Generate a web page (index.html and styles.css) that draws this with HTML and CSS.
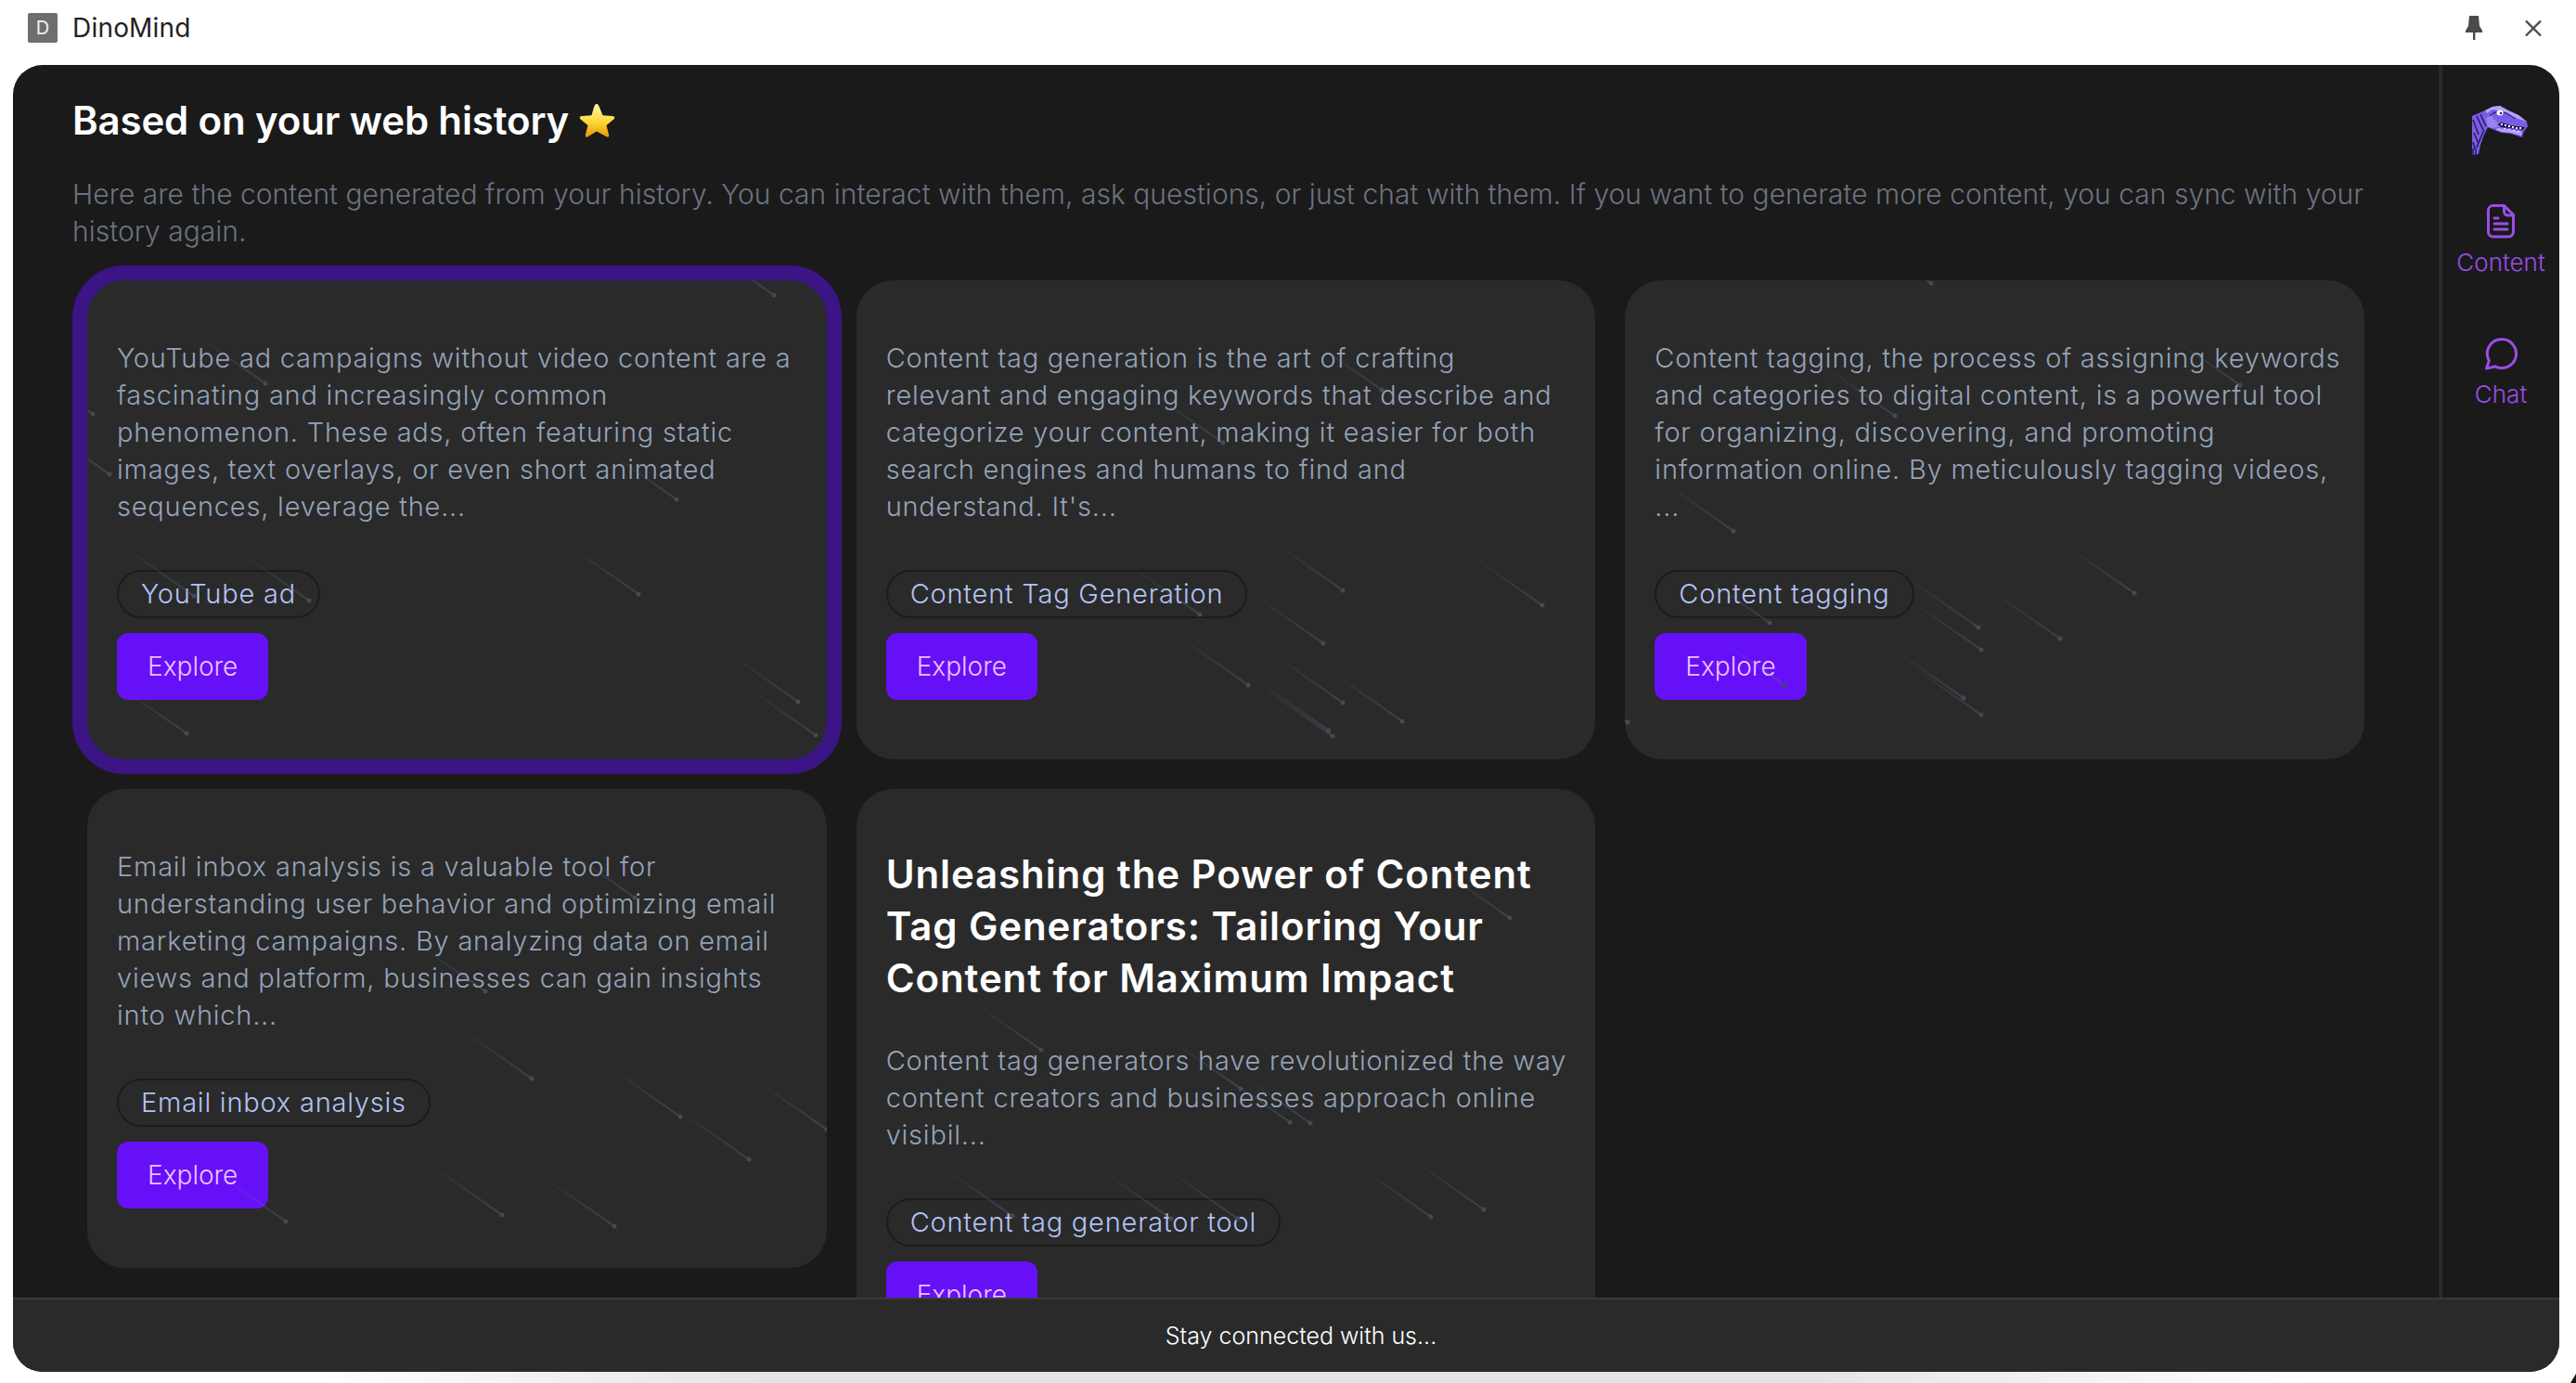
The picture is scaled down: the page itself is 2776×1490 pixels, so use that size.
FILE: index.html
```html
<!DOCTYPE html>
<html lang="en">
<head>
<meta charset="utf-8">
<title>DinoMind</title>
<link rel="stylesheet" href="styles.css">
</head>
<body>
<svg class="defs" width="0" height="0" aria-hidden="true">
  <defs>
    <linearGradient id="trail" x1="0" y1="0" x2="1" y2="1">
      <stop offset="0" stop-color="#64748b" stop-opacity="0"/>
      <stop offset="1" stop-color="#64748b" stop-opacity=".36"/>
    </linearGradient>
    <linearGradient id="gold" x1="0" y1="0" x2="0" y2="1">
      <stop offset="0" stop-color="#fff3b0"/>
      <stop offset=".55" stop-color="#fdd835"/>
      <stop offset="1" stop-color="#e8930c"/>
    </linearGradient>
    <g id="meteor">
      <line x1="-76" y1="-53" x2="0" y2="0" stroke="url(#trail)" stroke-width="2"/>
      <circle r="2.5" fill="#434a57"/>
    </g>
  </defs>
</svg>

<header class="titlebar">
  <div class="brand">
    <span class="app-icon">D</span>
    <span class="app-name">DinoMind</span>
  </div>
  <div class="window-actions">
    <svg class="pin" width="18" height="26" viewBox="0 0 18 26"><path d="M4 0h10l1 11 3 5v2H0v-2l3-5z M8 18h2.4v8H8z" fill="#4a4a4a"/></svg>
    <svg class="close" width="18" height="19" viewBox="0 0 18 19"><path d="M1 1.500l16 16M17 1.500L1 17.500" stroke="#4a4a4a" stroke-width="2.400" fill="none"/></svg>
  </div>
</header>

<div class="window">
  <div class="upper">
    <main class="content">
      <h1 class="title">Based on your web history<svg class="star" width="40" height="38" viewBox="0 0 40 38"><path d="M20 1c1.400 0 2 1 3 3.500l3.500 8.700 9.800.7c3 .2 4 1.800 1.800 3.800l-7.600 6.300 2.500 9.700c.7 2.700-.8 3.800-3 2.400L20 30.500l-9 5.600c-2.200 1.400-3.700.3-3-2.400l2.500-9.700-7.600-6.300C.7 15.700 1.700 14.100 4.700 13.900l9.800-.7L17 4.500C18 2 18.600 1 20 1z" fill="url(#gold)"/></svg></h1>
      <p class="intro">Here are the content generated from your history. You can interact with them, ask questions, or just chat with them. If you want to generate more content, you can sync with your<br>history again.</p>

      <section class="grid">
        <article class="card card-active">
          <svg class="meteors" aria-hidden="true">
            <use href="#meteor" x="740" y="16"/><use href="#meteor" x="192" y="111"/><use href="#meteor" x="6" y="144"/><use href="#meteor" x="24" y="209"/><use href="#meteor" x="635" y="236"/><use href="#meteor" x="239" y="345"/><use href="#meteor" x="594" y="338"/><use href="#meteor" x="115" y="340"/><use href="#meteor" x="107" y="488"/><use href="#meteor" x="766" y="454"/><use href="#meteor" x="785" y="490"/>
          </svg>
          <p class="summary">YouTube ad campaigns without video content are a<br>fascinating and increasingly common<br>phenomenon. These ads, often featuring static<br>images, text overlays, or even short animated<br>sequences, leverage the...</p>
          <span class="tag">YouTube ad</span>
          <a class="explore">Explore</a>
        </article>

        <article class="card">
          <svg class="meteors" aria-hidden="true">
            <use href="#meteor" x="524" y="334"/><use href="#meteor" x="739" y="350"/><use href="#meteor" x="370" y="360"/><use href="#meteor" x="503" y="391"/><use href="#meteor" x="395" y="175"/><use href="#meteor" x="566" y="118"/><use href="#meteor" x="422" y="436"/><use href="#meteor" x="524" y="455"/><use href="#meteor" x="588" y="475"/><use href="#meteor" x="509" y="485"/><use href="#meteor" x="513" y="491"/>
          </svg>
          <p class="summary">Content tag generation is the art of crafting<br>relevant and engaging keywords that describe and<br>categorize your content, making it easier for both<br>search engines and humans to find and<br>understand. It's...</p>
          <span class="tag">Content Tag Generation</span>
          <a class="explore">Explore</a>
        </article>

        <article class="card">
          <svg class="meteors" aria-hidden="true">
            <use href="#meteor" x="330" y="3"/><use href="#meteor" x="663" y="113"/><use href="#meteor" x="291" y="146"/><use href="#meteor" x="117" y="270"/><use href="#meteor" x="549" y="337"/><use href="#meteor" x="381" y="374"/><use href="#meteor" x="384" y="398"/><use href="#meteor" x="469" y="386"/><use href="#meteor" x="156" y="369"/><use href="#meteor" x="172" y="436"/><use href="#meteor" x="365" y="450"/><use href="#meteor" x="384" y="468"/><use href="#meteor" x="3" y="476"/>
          </svg>
          <p class="summary">Content tagging, the process of assigning keywords<br>and categories to digital content, is a powerful tool<br>for organizing, discovering, and promoting<br>information online. By meticulously tagging videos,<br>...</p>
          <span class="tag">Content tagging</span>
          <a class="explore">Explore</a>
        </article>

        <article class="card">
          <svg class="meteors" aria-hidden="true">
            <use href="#meteor" x="590" y="117"/><use href="#meteor" x="429" y="218"/><use href="#meteor" x="479" y="312"/><use href="#meteor" x="639" y="353"/><use href="#meteor" x="713" y="399"/><use href="#meteor" x="797" y="367"/><use href="#meteor" x="447" y="459"/><use href="#meteor" x="568" y="471"/><use href="#meteor" x="214" y="466"/>
          </svg>
          <p class="summary">Email inbox analysis is a valuable tool for<br>understanding user behavior and optimizing email<br>marketing campaigns. By analyzing data on email<br>views and platform, businesses can gain insights<br>into which...</p>
          <span class="tag">Email inbox analysis</span>
          <a class="explore">Explore</a>
        </article>

        <article class="card">
          <svg class="meteors" aria-hidden="true">
            <use href="#meteor" x="704" y="139"/><use href="#meteor" x="199" y="281"/><use href="#meteor" x="414" y="323"/><use href="#meteor" x="467" y="359"/><use href="#meteor" x="489" y="360"/><use href="#meteor" x="619" y="461"/><use href="#meteor" x="676" y="453"/><use href="#meteor" x="168" y="460"/><use href="#meteor" x="339" y="463"/><use href="#meteor" x="411" y="463"/>
          </svg>
          <h2 class="card-title">Unleashing the Power of Content<br>Tag Generators: Tailoring Your<br>Content for Maximum Impact</h2>
          <p class="summary">Content tag generators have revolutionized the way<br>content creators and businesses approach online<br>visibil...</p>
          <span class="tag">Content tag generator tool</span>
          <a class="explore">Explore</a>
        </article>
      </section>
    </main>

    <nav class="sidebar">
      <svg class="dino" width="64" height="56" viewBox="12 12 64 56">
        <path d="M13 66V24l7-3 7-3 8-4 8-1 9 5 11 5 9 7 1 5-5 7-1 5-12-4-10-1-8-3-7-3-4 8-4 11-2 10z" fill="#7a5de6"/>
        <path d="M27 18l8-4 8-1 9 5 11 5 9 7-12-4-9-4-8-4-8-1-6 4z" fill="#b9a3f7"/>
        <path d="M30 36l-2-9 6-6 2 6 6 5 24 3-8 1-16-1-6 2z" fill="#9a82ef"/>
        <path d="M40 33l5-2 10 3 15 2-2 3-13-2-10-1z" fill="#23134f"/>
        <path d="M40 37l9 1 13 2 5 1-1 4-11-3-10-1-6-2z" fill="#b9a3f7"/>
        <path d="M14 28l6 16M18 24l7 15M22 22l6 13M15 42l5 12M14 52l3 10M18 58l4-10M22 48l4-9" stroke="#2b1a66" stroke-width="1.600" fill="none"/>
        <path d="M13 66v-7h2v7zM16 66v-7h2v7z" fill="#3a2590"/>
        <path d="M32 24l4-3 6-2 8 2 10 6" stroke="#3a2590" stroke-width="1.400" fill="none"/>
        <path d="M44 32h2v2h-2zM48 33h2v2h-2zM52 34h2v2h-2zM56 35h2v2h-2zM60 36h2v2h-2zM64 36h2v2h-2zM47 37h2v1h-2zM52 38h2v1h-2zM57 39h2v1h-2zM62 40h2v1h-2z" fill="#f2ecff"/>
        <ellipse cx="43" cy="20.500" rx="3.600" ry="3" fill="#f6f2ff"/>
        <rect x="43" y="20" width="2" height="2" fill="#23134f"/>
      </svg>

      <a class="nav-item nav-content">
        <svg width="30" height="37" viewBox="0 0 30 37" fill="none" stroke="#9b4de8" stroke-width="3" stroke-linejoin="round" stroke-linecap="round">
          <path d="M6 1.500h12.500L28.500 11.500V30a5 5 0 0 1-5 5H6a5 5 0 0 1-4.500-5V6.500a5 5 0 0 1 4.500-5z"/>
          <path d="M18.500 2v6a4 4 0 0 0 4 4h6M8 15h4M8 21h14M8 27h14"/>
        </svg>
        <span>Content</span>
      </a>
      <a class="nav-item nav-chat">
        <svg width="35" height="35" viewBox="0 0 35 35" fill="none" stroke="#9b4de8" stroke-width="3" stroke-linejoin="round">
          <path d="M18 1.500a15.500 15.500 0 1 1-7 29.300L1.500 33l2.800-8.500A15.500 15.500 0 0 1 18 1.500z"/>
        </svg>
        <span>Chat</span>
      </a>
    </nav>
  </div>
  <footer class="footer">Stay connected with us...</footer>
</div>
<div class="under-shadow"></div>
</body>
</html>
```

FILE: styles.css
```css
* { box-sizing: border-box; }

html, body {
  margin: 0;
  height: 100%;
}

body {
  display: flex;
  flex-direction: column;
  background: #ffffff;
  font-family: "Inter", "Liberation Sans", sans-serif;
  overflow: hidden;
  position: relative;
}

.defs { position: absolute; }

.titlebar {
  height: 70px;
  flex: none;
  display: flex;
  align-items: center;
  justify-content: space-between;
  padding: 0 37px 10px 30px;
}

.brand { display: flex; align-items: center; gap: 16px; }

.app-icon {
  width: 32px;
  height: 32px;
  background: #6e6e6e;
  color: #f2f2f2;
  border-radius: 2px;
  font-size: 20px;
  line-height: 32px;
  text-align: center;
}

.app-name { font-size: 28px; color: #222; letter-spacing: .2px; }

.window-actions { display: flex; align-items: center; gap: 46px; }

.window {
  flex: none;
  width: 2744px;
  height: 1408px;
  margin-left: 14px;
  background: #1a1a1a;
  border-radius: 32px;
  overflow: hidden;
  display: flex;
  flex-direction: column;
}

.upper { flex: 1; min-height: 0; display: flex; }

.content {
  flex: 1;
  min-width: 0;
  padding: 36px 0 0 64px;
  overflow: hidden;
}

.title {
  margin: 0 0 35px;
  font-size: 42px;
  line-height: 48px;
  font-weight: 600;
  letter-spacing: -.15px;
  color: #ffffff;
  display: flex;
  align-items: center;
  gap: 10px;
}

.intro {
  margin: 0 0 33px;
  font-size: 30px;
  line-height: 40px;
  font-weight: 300;
  letter-spacing: .02px;
  color: #6b7280;
  white-space: nowrap;
}

.grid {
  margin-left: 16px;
  width: 2454px;
  display: grid;
  grid-template-columns: repeat(3, 1fr);
  gap: 32px;
  align-items: start;
}

.card {
  position: relative;
  overflow: hidden;
  background: #2a2a2a;
  border-radius: 40px;
  padding: 64px 32px;
  display: flex;
  flex-direction: column;
  align-items: flex-start;
}

.card-active { box-shadow: 0 0 0 16px #3b1585; overflow: visible; }

.meteors {
  position: absolute;
  inset: 0;
  width: 100%;
  height: 100%;
  pointer-events: none;
}

.card-title {
  margin: 0 0 41px;
  font-size: 42px;
  line-height: 56px;
  font-weight: 600;
  letter-spacing: .9px;
  color: #ffffff;
  white-space: nowrap;
}

.summary {
  margin: 0 0 48px;
  font-size: 29px;
  line-height: 40px;
  font-weight: 300;
  letter-spacing: .78px;
  color: #94a3b8;
  white-space: nowrap;
}

.tag {
  height: 52px;
  padding: 0 24px;
  border: 2px solid #1c1c1c;
  border-radius: 26px;
  font-size: 29px;
  line-height: 48px;
  font-weight: 300;
  letter-spacing: .78px;
  color: #b4c2f5;
  margin-bottom: 16px;
  white-space: nowrap;
}

.explore {
  height: 72px;
  padding: 0 33px;
  background: #6610f8;
  border-radius: 12px;
  font-size: 28px;
  line-height: 72px;
  font-weight: 300;
  color: #edc2ff;
}

.sidebar {
  flex: none;
  width: 130px;
  border-left: 4px solid #2a2a2a;
  display: flex;
  flex-direction: column;
  align-items: center;
  padding-top: 43px;
}

.dino { margin-bottom: 51px; }

.nav-item {
  display: flex;
  flex-direction: column;
  align-items: center;
  gap: 8px;
  font-size: 26px;
  line-height: 36px;
  font-weight: 300;
  color: #9b4de8;
}

.nav-content { margin-bottom: 63px; }

.footer {
  flex: none;
  height: 80px;
  background: #2a2a2a;
  border-top: 2px solid #3a3a3a;
  display: flex;
  align-items: center;
  justify-content: center;
  padding-left: 32px;
  font-size: 25px;
  font-weight: 300;
  color: #ffffff;
}

.under-shadow {
  flex: 1;
  background: linear-gradient(90deg, #ffffff 12%, #e4e4e4 30%, #e4e4e4 70%, #ffffff 90%);
}

.under-shadow::after {
  content: "";
  position: absolute;
  right: 0;
  bottom: 0;
  width: 6px;
  height: 10px;
  background: #1a1408;
  clip-path: polygon(100% 0, 100% 100%, 0 100%);
}
```
